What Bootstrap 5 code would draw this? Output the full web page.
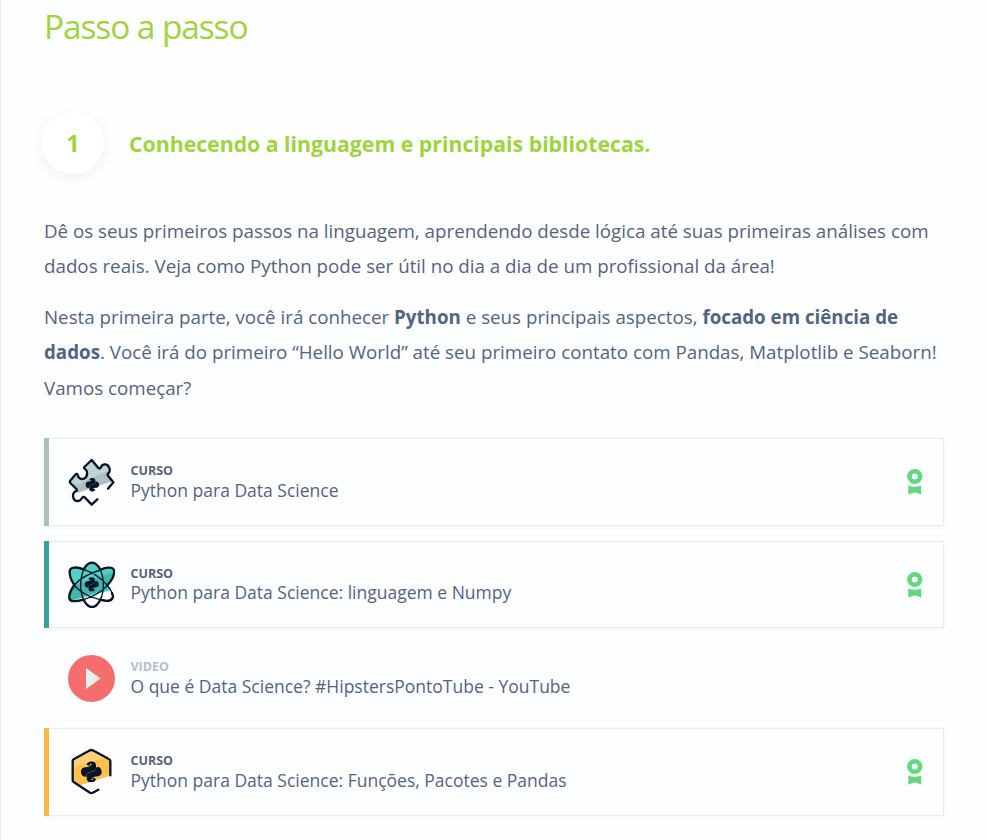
<!DOCTYPE html>
<html lang="pt-BR">
<head>
<meta charset="utf-8">
<meta name="viewport" content="width=device-width, initial-scale=1">
<title>Passo a passo</title>
<link href="https://cdn.jsdelivr.net/npm/bootstrap@5.3.0/dist/css/bootstrap.min.css" rel="stylesheet">
<style>
body{font-family:"Open Sans",sans-serif;background:#fcfeff;color:#52647f;overflow:hidden}
.guide{border-left:1px solid #e6ebf3;height:840px;padding:0 43px}
.guide-title{font-size:33.5px;line-height:46px;font-weight:400;letter-spacing:-1.12px;color:#9fd43c;padding-top:3px}
.step-head{margin:63px 0 0 -2px;gap:25px;color:#9fd43c}
.step-number{width:62px;height:62px;background:#fff;box-shadow:0 3px 14px rgba(60,80,120,.07);font-size:23.5px;font-weight:700;padding-top:1px}
.step-title{font-size:21.25px;font-weight:700;line-height:30px;padding-top:2px}
.step-text{font-size:18.75px;line-height:35.3px;white-space:nowrap;padding-top:39px}
.step-text p{margin-bottom:15.5px}
.step-text strong{font-weight:700}
.steps{padding-top:18px}
.item{height:88px;border-left:5px solid var(--tone);padding:0 21.5px 0 18px;margin-bottom:15px;background:#fdfeff;box-shadow:inset -1px 0 #e8ebf2,inset 0 1px #e8ebf2,inset 0 -1px #e8ebf2,0 1px 4px rgba(60,80,120,.06)}
.item-short{height:87px}
.item-video{height:70px;margin:0 0 15px;padding-left:23px}
.item-icon{width:48px;height:48px;flex:none;margin-right:15.5px}
.item-short .item-icon{margin-bottom:1px}
.item-kind{font-size:12.5px;font-weight:700;line-height:16px;color:#566179;margin:1px 0 -1px}
.item-video .item-kind{color:#b9bfca}
.item-name{font-size:17.5px;line-height:24px}
.item-short .item-kind{line-height:15px;margin:0}
.item-short .item-name{line-height:23px}
.medal{width:16px;height:28px;flex:none}
.ink{fill:none;stroke:#07142b;stroke-width:7;stroke-linecap:round;stroke-linejoin:round}
.ink-fine{stroke-width:4}
</style>
</head>
<body>
<svg class="d-none">
  <symbol id="snake" viewBox="0 0 64 64">
    <g fill="#07142b">
      <path d="M18 10C20 2 28 1 34 1c8 0 12 5 12 12v8c0 7-5 9-10 10l-11 2c-6 2-7 6-8 13-9 3-16-4-16-14C1 22 8 18 16 18c5 0 10-2 14-4-5 0-9-1-12-4z"/>
      <path transform="rotate(180 32 32)" d="M18 10C20 2 28 1 34 1c8 0 12 5 12 12v8c0 7-5 9-10 10l-11 2c-6 2-7 6-8 13-9 3-16-4-16-14C1 22 8 18 16 18c5 0 10-2 14-4-5 0-9-1-12-4z"/>
    </g>
  </symbol>
  <symbol id="medal" viewBox="0 0 16 28">
    <circle cx="7.800" cy="8.500" r="5.300" fill="none" stroke="#5fd97c" stroke-width="4.600"/>
    <path fill="#5fd97c" d="M1.300 17.500Q8 20 14.200 17.500V26.500L11.500 25.500Q8 23.500 4.500 25.500L1.300 26.500Z"/>
  </symbol>
</svg>
<main class="guide">
  <h1 class="guide-title mb-0">Passo a passo</h1>
  <div class="step-head d-flex align-items-center">
    <div class="step-number rounded-circle d-flex align-items-center justify-content-center">1</div>
    <h2 class="step-title mb-0">Conhecendo a linguagem e principais bibliotecas.</h2>
  </div>
  <div class="step-text">
    <p>Dê os seus primeiros passos na linguagem, aprendendo desde lógica até suas primeiras análises com<br>dados reais. Veja como Python pode ser útil no dia a dia de um profissional da área!</p>
    <p>Nesta primeira parte, você irá conhecer <strong>Python</strong> e seus principais aspectos, <strong>focado em ciência de<br>dados</strong>. Você irá do primeiro “Hello World” até seu primeiro contato com Pandas, Matplotlib e Seaborn!<br>Vamos começar?</p>
  </div>
  <div class="steps">
    <div class="item d-flex align-items-center" style="--tone:#abc0bf">
      <svg class="item-icon" viewBox="81 84 144 144">
        <path fill="#c0d4d4" d="M155 89l25 23c0-17 30-17 30 2 0 10-3 14-8 17l-91 37-21-11 24-25c7 22 31 14 29-3-1-8-6-11-12-14z"/>
        <path fill="#abc0bf" d="M92 157l20 8 88-42 18 31-106 35 0-12z"/>
        <path class="ink" d="M204 176l16-19-17-21c-1-3 0-5 3-7 7-8 1-26-11-26-12 0-11 10-15 12-3 1-5-1-7-3l-18-22-22 21c-2 3 0 5 3 7 7 4 8 21-2 27-10 6-20-1-21-10-1-4-4-4-7-1l-16 19c-1 2-1 4 1 6l18 18c4 4 1 6-4 8-10 7-7 28 8 28 12 0 11-10 16-12 4-1 5 1 8 4l18 19 17-16"/>
        <use href="#snake" x="136" y="142" width="42" height="44"/>
      </svg>
      <div class="flex-grow-1"><div class="item-kind">CURSO</div><div class="item-name">Python para Data Science</div></div>
      <svg class="medal"><use href="#medal"/></svg>
    </div>
    <div class="item item-short d-flex align-items-center" style="--tone:#37a597">
      <svg class="item-icon" viewBox="81 75 144 144">
        <g transform="translate(60 60)">
          <path fill="#50d1c2" d="M70 42Q95 6 122 44C145 32 163 36 163 50Q160 70 142 91L155 105 32 137C26 122 32 105 43 90 30 72 20 38 42 38Q55 36 70 42z"/>
          <path fill="#42b8ab" d="M43 90L163 50Q160 70 142 91L153 99 32 137C26 122 32 105 43 90z"/>
          <path class="ink ink-fine" d="M71 44Q62 64 62 90T71 134M121 44Q130 64 130 90T121 134M71 43C98 52 126 72 142 91Q152 103 156 114M43 90C58 110 92 129 121 134M121 45C92 54 60 70 43 90M142 91C126 110 98 125 71 134"/>
          <path class="ink" d="M71 43Q82 23 96 23T121 44C144 34 163 36 163 51Q161 70 142 91M71 43C50 35 30 35 29 49Q28 68 43 90C27 112 22 135 36 138Q50 140 71 134Q82 156 96 156T121 134C145 141 158 137 159 124L156 114"/>
        </g>
        <use href="#snake" x="133" y="126" width="44" height="44"/>
      </svg>
      <div class="flex-grow-1"><div class="item-kind">CURSO</div><div class="item-name">Python para Data Science: linguagem e Numpy</div></div>
      <svg class="medal"><use href="#medal"/></svg>
    </div>
    <div class="item-video d-flex align-items-center">
      <svg class="item-icon" viewBox="0 0 48 48"><circle cx="24.500" cy="24.500" r="23.500" fill="#f66d6d"/><path fill="#efefef" d="M19 14l14.600 10.500L19 35z"/></svg>
      <div><div class="item-kind">VIDEO</div><div class="item-name">O que é Data Science? #HipstersPontoTube - YouTube</div></div>
    </div>
    <div class="item d-flex align-items-center" style="--tone:#fab748">
      <svg class="item-icon" viewBox="81 78 144 144">
        <path fill="#ffd074" d="M154 86l54 31v46L122 189 99 176v-59z"/>
        <path fill="#fec04b" d="M99 136l109-34 1 58L122 189 99 176z"/>
        <path class="ink" d="M211 160v-43q0-3-3-5l-50-27q-4-2-8 0l-49 27q-3 2-3 5v58q0 3 3 5l49 32q4 3 8 0l17-9"/>
        <path fill="#fdfeff" d="M204 96l10 8v8l-10-6z"/>
        <use href="#snake" x="122" y="117" width="64" height="65"/>
        <circle cx="152" cy="128" r="2.500" fill="#fec04b"/><circle cx="157" cy="172" r="2.500" fill="#fec04b"/>
      </svg>
      <div class="flex-grow-1"><div class="item-kind">CURSO</div><div class="item-name">Python para Data Science: Funções, Pacotes e Pandas</div></div>
      <svg class="medal"><use href="#medal"/></svg>
    </div>
  </div>
</main>
<script src="https://cdn.jsdelivr.net/npm/bootstrap@5.3.0/dist/js/bootstrap.bundle.min.js"></script>
</body>
</html>
